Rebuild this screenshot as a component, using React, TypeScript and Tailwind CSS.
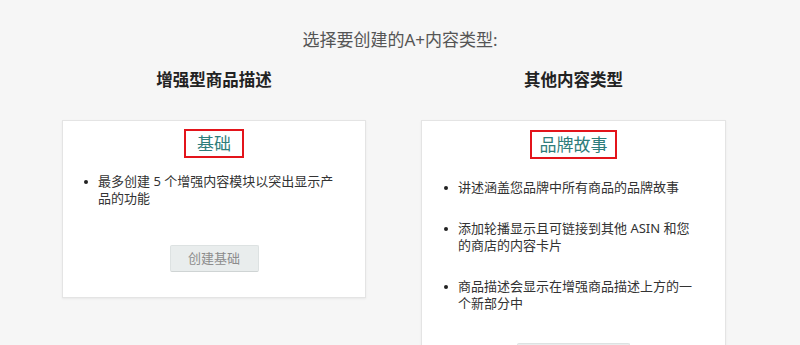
import React from "react";

const font = {
  fontFamily: '"Noto Sans", "Noto Sans CJK SC", sans-serif',
};

const Bullet: React.FC<{ children: React.ReactNode }> = ({ children }) => (
  <li className="flex items-start gap-[10px]">
    <span className="mt-[7px] h-[4px] w-[4px] shrink-0 rounded-full bg-[#222]" />
    <span className="whitespace-nowrap">{children}</span>
  </li>
);

const App: React.FC = () => {
  return (
    <div
      className="h-[345px] w-[800px] overflow-hidden bg-[#f6f6f6] text-[#333]"
      style={font}
    >
      <h1 className="pt-[28px] text-center text-[17px] leading-6 text-[#555]">
        选择要创建的A+内容类型:
      </h1>

      <div className="mt-4 ml-[62px] flex gap-[55px]">
        {/* Enhanced description */}
        <div className="w-[304px]">
          <h2 className="text-center text-[16.5px] font-bold leading-6 text-[#222]">
            增强型商品描述
          </h2>
          <div className="mt-[28px] h-[178px] border border-[#e4e4e4] bg-white pt-[8px] shadow-[0_1px_2px_rgba(0,0,0,0.06)]">
            <div className="mx-auto flex h-[29px] w-[60px] items-center justify-center border-2 border-[#e3141b] text-[17px] text-[#2e7d7b]">
              基础
            </div>
            <ul className="mt-[15px] pl-[21px] text-[13px] leading-[17px] text-[#333]">
              <Bullet>
                最多创建 5 个增强内容模块以突出显示产
                <br />
                品的功能
              </Bullet>
            </ul>
            <div className="mt-[38px] flex justify-center">
              <button className="h-[27px] w-[89px] rounded-[2px] border border-[#dde2e2] border-b-[#cfd4d4] bg-[#e9eded] text-[13px] text-[#8c8c8c]">
                创建基础
              </button>
            </div>
          </div>
        </div>

        {/* Other content types */}
        <div className="w-[305px]">
          <h2 className="text-center text-[16.5px] font-bold leading-6 text-[#222]">
            其他内容类型
          </h2>
          <div className="mt-[28px] h-[260px] border border-[#e4e4e4] bg-white pt-[9px] shadow-[0_1px_2px_rgba(0,0,0,0.06)]">
            <div className="mx-auto flex h-[29px] w-[87px] items-center justify-center border-2 border-[#e3141b] text-[17px] text-[#2e7d7b]">
              品牌故事
            </div>
            <ul className="mt-[20px] flex flex-col gap-[24px] pl-[22px] text-[13px] leading-[17px] text-[#333]">
              <Bullet>讲述涵盖您品牌中所有商品的品牌故事</Bullet>
              <Bullet>
                添加轮播显示且可链接到其他 ASIN 和您
                <br />
                的商店的内容卡片
              </Bullet>
              <Bullet>
                商品描述会显示在增强商品描述上方的一
                <br />
                个新部分中
              </Bullet>
            </ul>
            <div className="mt-[31px] flex justify-center">
              <button className="h-[27px] w-[113px] rounded-[2px] border border-[#dde2e2] border-b-[#cfd4d4] bg-[#e9eded]" />
            </div>
          </div>
        </div>
      </div>
    </div>
  );
};

export default App;
